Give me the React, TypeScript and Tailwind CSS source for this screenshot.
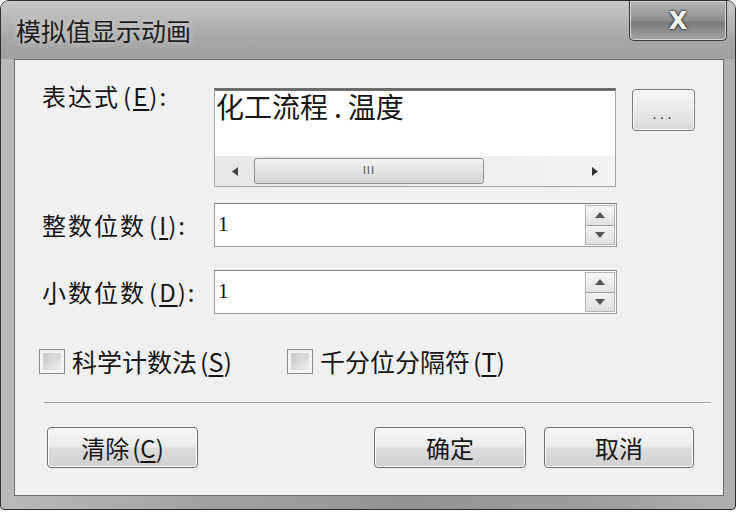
const cjk = { fontFamily: '"Noto Sans CJK SC", "Noto Sans", sans-serif' }

const Key: React.FC<{ k: string }> = ({ k }) => (
  <span className="ml-[3px]">
    (<span className="underline underline-offset-[3px]">{k}</span>)
  </span>
)

const Spin: React.FC = () => (
  <div className="flex h-[44px] w-[403px] items-center border border-[#9a9a9a] border-t-[#7e7e7e] bg-white pr-[1px]">
    <span className="flex-1 pl-[3px] text-[21px] text-[#111]" style={{ fontFamily: '"Liberation Serif", serif' }}>
      1
    </span>
    <div className="flex h-[40px] w-[30px] flex-col border border-[#b5b5b5]">
      <div className="flex flex-1 items-center justify-center border-b border-[#9c9c9c] bg-[linear-gradient(#f7f7f7,#e3e3e3)]">
        <svg width="10" height="6" viewBox="0 0 10 6"><path d="M5 0L10 6H0z" fill="#555" /></svg>
      </div>
      <div className="flex flex-1 items-center justify-center bg-[linear-gradient(#f2f2f2,#e0e0e0)]">
        <svg width="10" height="6" viewBox="0 0 10 6"><path d="M0 0H10L5 6z" fill="#555" /></svg>
      </div>
    </div>
  </div>
)

const Check: React.FC<{ label: string; k: string }> = ({ label, k }) => (
  <div className="flex items-center gap-[7px]">
    <div className="flex h-[25px] w-[26px] items-center justify-center border border-[#8c8c8c] bg-[#f4f4f4]">
      <div className="h-[17px] w-[18px] bg-[linear-gradient(135deg,#c9c9c9,#ececec)]" />
    </div>
    <span className="text-[25px] leading-none text-[#151515]">
      {label}
      <Key k={k} />
    </span>
  </div>
)

const Btn: React.FC<{ w: string; children: React.ReactNode }> = ({ w, children }) => (
  <div
    className={`${w} flex h-[41px] items-center justify-center rounded-[4px] border border-[#6f6f6f] bg-[linear-gradient(#f6f6f6,#ebebeb_48%,#dcdcdc_52%,#d0d0d0)] text-[24px] leading-none text-[#151515] shadow-[inset_0_0_0_1px_#fcfcfc]`}
  >
    {children}
  </div>
)

export default function App() {
  return (
    <div className="h-[512px] w-[740px] bg-white" style={cjk}>
      <div className="flex h-[510px] w-[736px] flex-col rounded-t-[9px] rounded-b-[4px] border border-[#2e2e2e] bg-[linear-gradient(90deg,#b9b9b9,#a0a0a0_30%,#949494_55%,#9c9c9c_80%,#b0b0b0)]">
        <div className="flex h-[58px] items-start justify-between bg-[linear-gradient(#c8c8c8,#a8a8a8_60%,#a0a0a0)] rounded-t-[8px]">
          <span className="pl-[15px] pt-[17px] text-[25px] leading-none text-[#1c1c1c] [text-shadow:0_0_6px_#e0e0e0]">
            模拟值显示动画
          </span>
          <div className="mr-[8px] flex h-[40px] w-[98px] items-center justify-center rounded-b-[5px] border border-t-0 border-[#3a3a3a] bg-[linear-gradient(#b8b8b8,#8d8d8d_50%,#7a7a7a_55%,#a4a4a4)] shadow-[inset_0_0_0_1px_#d6d6d6]">
            <span className="text-[24px] font-bold leading-none text-white [text-shadow:0_0_2px_#222,0_0_3px_#222]" style={{ fontFamily: '"DejaVu Sans", sans-serif' }}>
              X
            </span>
          </div>
        </div>
        <div className="mb-[13px] ml-[13px] mr-[11px] flex-1 border border-[#6b6b6b] bg-[#f0f0f0] pl-[27px] pt-[28px]">
          <div className="flex items-start">
            <div className="mt-[-4px] w-[172px] text-[24px] leading-none tracking-[2px] text-[#151515]">
              表达式<Key k="E" />:
            </div>
            <div className="flex h-[99px] w-[402px] flex-col border border-[#a5a5a5] border-t-[3px] border-t-[#6d6d6d] bg-white">
              <div className="flex-1 pl-[1px] pt-[1px] text-[28px] leading-none text-[#151515]">
                化工流程<span className="mx-[6px]">.</span>温度
              </div>
              <div className="flex h-[30px] items-center bg-[linear-gradient(90deg,#e8e8e8,#f3f3f3)] px-[1px]">
                <div className="flex w-[38px] items-center justify-center">
                  <svg width="6" height="9" viewBox="0 0 6 9"><path d="M6 0V9L0 4.5z" fill="#444" /></svg>
                </div>
                <div className="flex h-[26px] w-[230px] items-center justify-center rounded-[3px] border border-[#8f8f8f] bg-[linear-gradient(#f4f4f4,#e4e4e4_50%,#d4d4d4)]">
                  <span className="text-[11px] tracking-[1px] text-[#555]" style={{ fontFamily: '"DejaVu Sans", sans-serif' }}>III</span>
                </div>
                <div className="flex-1" />
                <div className="flex w-[38px] items-center justify-center">
                  <svg width="6" height="9" viewBox="0 0 6 9"><path d="M0 0V9L6 4.5z" fill="#333" /></svg>
                </div>
              </div>
            </div>
            <div className="ml-[16px] mt-[1px] flex h-[42px] w-[63px] items-end justify-center rounded-[4px] border border-[#7a7a7a] bg-[linear-gradient(#f7f7f7,#e9e9e9_50%,#d8d8d8)] pb-[9px] shadow-[inset_0_0_0_1px_#fdfdfd]">
              <span className="text-[14px] leading-none tracking-[3px] text-[#333]" style={{ fontFamily: '"DejaVu Sans", sans-serif' }}>...</span>
            </div>
          </div>

          <div className="mt-[16px] flex items-center">
            <div className="w-[172px] text-[24px] leading-none tracking-[2px] text-[#151515]">
              整数位数<Key k="I" />:
            </div>
            <Spin />
          </div>

          <div className="mt-[23px] flex items-center">
            <div className="w-[172px] text-[24px] leading-none tracking-[2px] text-[#151515]">
              小数位数<Key k="D" />:
            </div>
            <Spin />
          </div>

          <div className="ml-[-3px] mt-[35px] flex items-center">
            <div className="w-[248px]">
              <Check label="科学计数法" k="S" />
            </div>
            <Check label="千分位分隔符" k="T" />
          </div>

          <div className="ml-[2px] mt-[28px] h-[2px] w-[667px] border-t border-b border-t-[#a2a2a2] border-b-white" />

          <div className="ml-[5px] mt-[23px] flex items-center">
            <Btn w="w-[151px]">
              清除<Key k="C" />
            </Btn>
            <div className="w-[176px]" />
            <Btn w="w-[152px]">确定</Btn>
            <div className="w-[18px]" />
            <Btn w="w-[150px]">取消</Btn>
          </div>
        </div>
      </div>
    </div>
  )
}
